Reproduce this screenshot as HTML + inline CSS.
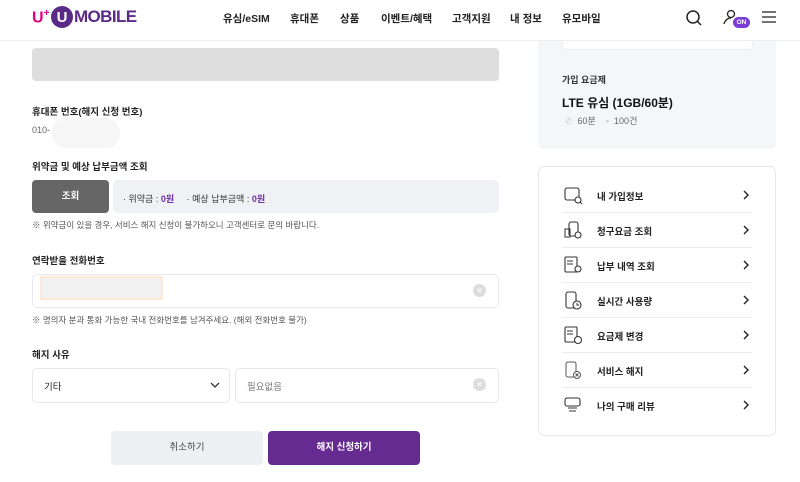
<!DOCTYPE html>
<html><head><meta charset="utf-8"><style>
*{margin:0;padding:0;box-sizing:border-box}
body{width:800px;height:482px;overflow:hidden;background:#fff;font-family:"Liberation Sans","Noto Sans CJK KR",sans-serif;color:#111;position:relative}
.a{position:absolute;white-space:nowrap}
.nav{font-size:10.5px;font-weight:bold;color:#222;top:11px;z-index:6}
.lbl{font-size:9.5px;font-weight:bold;color:#222}
.note{font-size:8.5px;color:#555}
.box{position:absolute;border:1px solid #e8e8ec;border-radius:5px;background:#fff}
.item{position:absolute;left:562px;width:190px;height:35px;border-bottom:1px solid #ececee}
.item span{position:absolute;left:35px;top:11px;font-size:9.5px;font-weight:bold;color:#222}
.item svg.ic{position:absolute;left:2px;top:8px}
.item svg.ch{position:absolute;left:180px;top:12px}
.clr{position:absolute;width:13px;height:13px;border-radius:50%;background:#ddd;color:#fff;font-size:8px;text-align:center;line-height:13px;font-weight:bold}
.hd{z-index:6}
</style></head><body>
<!-- right panel -->
<div class="a" style="left:538px;top:-10px;width:238px;height:159px;background:#f5f6f8;border-radius:6px"></div>
<div class="a" style="left:562px;top:-5px;width:191px;height:55px;background:#fff;border:1px solid #eceef1;border-radius:4px"></div>
<div class="a" style="left:562px;top:73px;font-size:9px;font-weight:bold;color:#333">가입 요금제</div>
<div class="a" style="left:562px;top:94px;font-size:12px;font-weight:bold;color:#111">LTE 유심 (1GB/60분)</div>
<div class="a" style="left:565px;top:114px;font-size:9px;color:#666"><span style="color:#ccc">✆</span>&nbsp; 60분&nbsp;&nbsp;&nbsp;&nbsp;<span style="color:#ccc">▪</span>&nbsp; 100건</div>

<!-- header -->
<div class="a hd" style="left:0;top:0;width:800px;height:41px;border-bottom:1px solid #eee;background:#fff"></div>
<div class="a hd" style="left:32px;top:4px;font-size:16px;font-weight:bold;color:#e6007e;line-height:20px">U<sup style="font-size:10px">+</sup></div>
<div class="a hd" style="left:51px;top:6px;width:22px;height:22px;border-radius:50%;background:#5b2a86;color:#fff;font-weight:bold;font-size:15px;text-align:center;line-height:23px">U</div>
<div class="a hd" style="left:74px;top:7px;font-size:17px;font-weight:bold;color:#5b2a86;letter-spacing:-0.6px;line-height:20px">MOBILE</div>
<div class="a nav" style="left:223px">유심/eSIM</div>
<div class="a nav" style="left:290px">휴대폰</div>
<div class="a nav" style="left:340px">상품</div>
<div class="a nav" style="left:381px">이벤트/혜택</div>
<div class="a nav" style="left:452px">고객지원</div>
<div class="a nav" style="left:510px">내 정보</div>
<div class="a nav" style="left:562px">유모바일</div>
<svg class="a hd" style="left:685px;top:9px" width="18" height="18"><circle cx="8" cy="8" r="6" fill="none" stroke="#222" stroke-width="1.5"/><line x1="12.5" y1="12.5" x2="16" y2="16" stroke="#222" stroke-width="1.5"/></svg>
<svg class="a hd" style="left:723px;top:9px" width="16" height="16"><circle cx="8" cy="5" r="3.5" fill="none" stroke="#222" stroke-width="1.3"/><path d="M1 15c1-4 4-6 7-6" fill="none" stroke="#222" stroke-width="1.3"/></svg>
<div class="a hd" style="left:733px;top:17px;width:17px;height:11px;border-radius:6px;background:#7a3ed6;color:#fff;font-size:6.5px;font-weight:bold;text-align:center;line-height:11px">ON</div>
<svg class="a hd" style="left:761px;top:10px" width="16" height="14"><path d="M1 2h14M1 7h14M1 12h14" stroke="#222" stroke-width="1.3"/></svg>

<!-- left form -->
<div class="a" style="left:32px;top:48px;width:467px;height:33px;background:#dedede;border-radius:4px"></div>
<div class="a lbl" style="left:32px;top:104px">휴대폰 번호(해지 신청 번호)</div>
<div class="a" style="left:32px;top:125px;font-size:9px;color:#666">010-</div>
<div class="a" style="left:52px;top:118px;width:68px;height:30px;background:#f6f6f6;border-radius:14px"></div>
<div class="a lbl" style="left:32px;top:159px">위약금 및 예상 납부금액 조회</div>
<div class="a" style="left:32px;top:180px;width:77px;height:33px;background:#666;border-radius:4px;color:#fff;font-size:9.5px;font-weight:bold;text-align:center;line-height:33px">조회</div>
<div class="a" style="left:113px;top:180px;width:386px;height:33px;background:#f0f1f5;border-radius:5px"></div>
<div class="a" style="left:123px;top:192px;font-size:9px;color:#333">· 위약금 : <b style="color:#6b2fa0">0원</b>&nbsp;&nbsp;&nbsp;&nbsp; · 예상 납부금액 : <b style="color:#6b2fa0">0원</b></div>
<div class="a note" style="left:32px;top:219px">※ 위약금이 있을 경우, 서비스 해지 신청이 불가하오니 고객센터로 문의 바랍니다.</div>
<div class="a lbl" style="left:32px;top:253px">연락받을 전화번호</div>
<div class="box" style="left:32px;top:274px;width:467px;height:34px"></div>
<div class="a" style="left:40px;top:276px;width:123px;height:24px;border:2px solid #fde9d4;background:#f1f1f1"></div>
<div class="clr" style="left:473px;top:284px">×</div>
<div class="a note" style="left:32px;top:314px">※ 명의자 분과 통화 가능한 국내 전화번호를 남겨주세요. (해외 전화번호 불가)</div>
<div class="a lbl" style="left:32px;top:347px">해지 사유</div>
<div class="box" style="left:32px;top:368px;width:198px;height:35px"></div>
<div class="a" style="left:44px;top:379px;font-size:9.5px;color:#222">기타</div>
<svg class="a" style="left:210px;top:382px" width="10" height="7"><path d="M1 1l4 4 4-4" fill="none" stroke="#333" stroke-width="1.3"/></svg>
<div class="box" style="left:235px;top:368px;width:264px;height:35px"></div>
<div class="a" style="left:247px;top:379px;font-size:9.5px;color:#777">필요없음</div>
<div class="clr" style="left:473px;top:378px">×</div>
<div class="a" style="left:111px;top:431px;width:152px;height:34px;background:#eeeff3;border-radius:4px;font-size:9.5px;color:#444;text-align:center;line-height:34px">취소하기</div>
<div class="a" style="left:268px;top:431px;width:152px;height:34px;background:#652b91;border-radius:4px;font-size:9.5px;font-weight:bold;color:#fff;text-align:center;line-height:34px">해지 신청하기</div>

<div class="a" style="left:538px;top:166px;width:238px;height:270px;border:1px solid #e8e8ec;border-radius:6px"></div>
<div class="item" style="top:178px"><svg class="ic" width="20" height="20"><rect x="1" y="2" width="14" height="12" rx="2" fill="none" stroke="#333" stroke-width="1.1"/><circle cx="14" cy="14" r="3" fill="#fff" stroke="#333" stroke-width="1.1"/><path d="M16 16l2 2" stroke="#333"/></svg><span>내 가입정보</span><svg class="ch" width="8" height="10"><path d="M2 1l4 4-4 4" fill="none" stroke="#222" stroke-width="1.4"/></svg></div>
<div class="item" style="top:213px"><svg class="ic" width="20" height="20"><rect x="5" y="1" width="9" height="14" rx="2" fill="none" stroke="#333" stroke-width="1.1"/><rect x="1" y="8" width="5" height="8" fill="none" stroke="#333"/><circle cx="14" cy="14" r="3" fill="#fff" stroke="#333" stroke-width="1.1"/></svg><span>청구요금 조회</span><svg class="ch" width="8" height="10"><path d="M2 1l4 4-4 4" fill="none" stroke="#222" stroke-width="1.4"/></svg></div>
<div class="item" style="top:248px"><svg class="ic" width="20" height="20"><rect x="1" y="1" width="12" height="15" rx="1" fill="none" stroke="#333" stroke-width="1.1"/><path d="M3 5h6M3 8h6" stroke="#333"/><circle cx="14" cy="13" r="3" fill="#fff" stroke="#333" stroke-width="1.1"/></svg><span>납부 내역 조회</span><svg class="ch" width="8" height="10"><path d="M2 1l4 4-4 4" fill="none" stroke="#222" stroke-width="1.4"/></svg></div>
<div class="item" style="top:283px"><svg class="ic" width="20" height="20"><rect x="2" y="1" width="10" height="16" rx="2" fill="none" stroke="#333" stroke-width="1.1"/><circle cx="13" cy="14" r="4" fill="#fff" stroke="#333" stroke-width="1.1"/><path d="M13 12v2h2" fill="none" stroke="#333"/></svg><span>실시간 사용량</span><svg class="ch" width="8" height="10"><path d="M2 1l4 4-4 4" fill="none" stroke="#222" stroke-width="1.4"/></svg></div>
<div class="item" style="top:318px"><svg class="ic" width="20" height="20"><rect x="1" y="1" width="12" height="15" rx="1" fill="none" stroke="#333" stroke-width="1.1"/><path d="M3 5h6M3 8h6" stroke="#333"/><circle cx="14" cy="14" r="3.5" fill="#fff" stroke="#333" stroke-width="1.1"/></svg><span>요금제 변경</span><svg class="ch" width="8" height="10"><path d="M2 1l4 4-4 4" fill="none" stroke="#222" stroke-width="1.4"/></svg></div>
<div class="item" style="top:353px"><svg class="ic" width="20" height="20"><rect x="2" y="1" width="10" height="15" rx="2" fill="none" stroke="#555" stroke-width="1"/><circle cx="13" cy="14" r="3.5" fill="#fff" stroke="#555"/><path d="M11.5 12.5l3 3M14.5 12.5l-3 3" stroke="#555"/></svg><span>서비스 해지</span><svg class="ch" width="8" height="10"><path d="M2 1l4 4-4 4" fill="none" stroke="#222" stroke-width="1.4"/></svg></div>
<div class="item" style="top:388px;border-bottom:none"><svg class="ic" width="20" height="20"><rect x="1" y="2" width="15" height="8" rx="2" fill="none" stroke="#333" stroke-width="1.1"/><path d="M4 12h9M5 15h7" stroke="#333"/></svg><span>나의 구매 리뷰</span><svg class="ch" width="8" height="10"><path d="M2 1l4 4-4 4" fill="none" stroke="#222" stroke-width="1.4"/></svg></div>
</body></html>
